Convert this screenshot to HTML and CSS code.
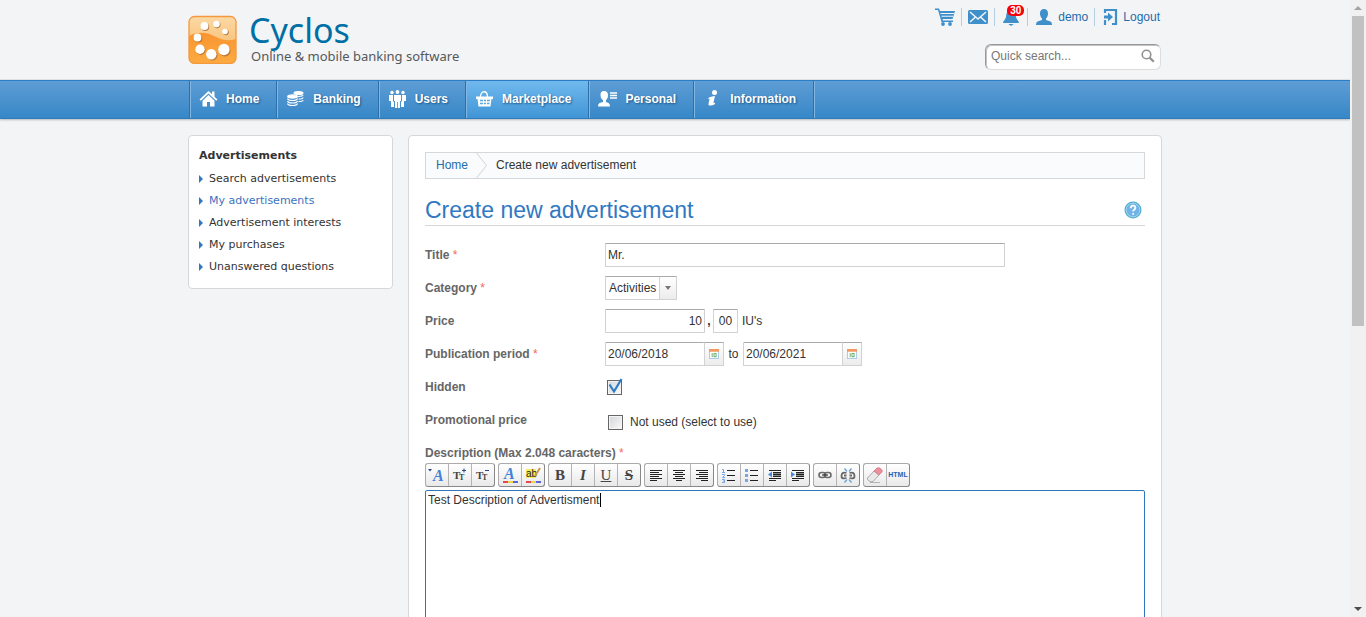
FILE: index.html
```html
<!DOCTYPE html>
<html lang="en">
<head>
<meta charset="utf-8">
<title>Cyclos - Create new advertisement</title>
<link rel="stylesheet" href="styles.css">
</head>
<body>
<div class="page">
  <header class="header">
    <div class="container header-inner">
      <a class="brand" href="#">
        <svg class="brand-mark" viewBox="0 0 49 49" aria-hidden="true">
          <defs>
            <linearGradient id="lg1" x1="0" y1="0" x2="0" y2="1"><stop offset="0" stop-color="#fbd9a6"/><stop offset="1" stop-color="#f7b25a"/></linearGradient>
            <linearGradient id="lg2" x1="0" y1="0" x2="0" y2="1"><stop offset="0" stop-color="#f9942f"/><stop offset="1" stop-color="#fcab42"/></linearGradient>
          </defs>
          <rect x="1" y="1.500" width="47" height="47" rx="5.500" fill="url(#lg1)"/>
          <path d="M1 21C10 16 19 17 28 22C36 26 42 26 48 24V43Q48 48.500 42 48.500H7Q1 48.500 1 43Z" fill="url(#lg2)"/>
          <rect x="1" y="1.500" width="47" height="47" rx="5.500" fill="none" stroke="#f5993f" stroke-width="1.300"/>
          <g fill="#a8672b" opacity=".75"><circle cx="17.300" cy="12" r="3.900"/><circle cx="29.200" cy="9.800" r="3.400"/><circle cx="37.900" cy="17.300" r="2.900"/><circle cx="10.500" cy="23.500" r="3.900"/><circle cx="12.800" cy="35.300" r="4.700"/><circle cx="24.300" cy="40.300" r="5.200"/><circle cx="36.900" cy="35.700" r="5.700"/></g>
          <g fill="#fff"><circle cx="16.500" cy="11" r="3.900"/><circle cx="28.500" cy="9" r="3.300"/><circle cx="37" cy="16.500" r="2.800"/><circle cx="9.500" cy="22.500" r="3.900"/><circle cx="12" cy="34.300" r="4.700"/><circle cx="23.300" cy="39.300" r="5.200"/><circle cx="35.900" cy="34.500" r="5.700"/></g>
        </svg>
        <span class="brand-text">
          <span class="brand-name">Cyclos</span>
          <span class="brand-tagline">Online &amp; mobile banking software</span>
        </span>
      </a>
      <div class="header-tools">
        <nav class="user-links" aria-label="User">
          <a href="#" aria-label="Cart"><svg width="20" height="18" viewBox="0 0 20 18" fill="#3f8fcb"><path d="M0 0.500H4L5 3H20L17.500 11H7.500L8 12.500H18V14H6.500L3 2H0Z"/><path d="M5.500 5.500H19M6.500 8.300H18" stroke="#f3f4f6" stroke-width="1.100"/><circle cx="8" cy="16" r="1.900"/><circle cx="15" cy="16" r="1.900"/></svg></a>
          <a href="#" aria-label="Messages"><svg width="20" height="18" viewBox="0 0 20 18"><rect y="2" width="20" height="14" rx="1.500" fill="#3f8fcb"/><path d="M2 4L10 11L18 4M2 14L7.500 9M18 14L12.500 9" fill="none" stroke="#f3f4f6" stroke-width="1.500"/></svg></a>
          <a class="bell" href="#" aria-label="Notifications"><svg width="20" height="18" viewBox="0 0 20 18" fill="#3f8fcb"><path d="M10 2C5.500 2 5.500 6 5 9C4.500 11.500 2 13 2 15H18C18 13 15.500 11.500 15 9C14.500 6 14.500 2 10 2ZM7.500 16H12.500Q10 19.500 7.500 16Z"/></svg><span class="badge">30</span></a>
          <a href="#"><svg width="18" height="18" viewBox="0 0 18 18" fill="#3f8fcb"><path d="M9 1C6.500 1 4.900 2.500 5 5.500C5 8 6 9.500 7 10.500V12L2.500 13.500Q1 14.200 1 17H17Q17 14.200 15.500 13.500L11 12V10.500C12 9.500 13 8 13 5.500C13 2.500 11.500 1 9 1Z"/></svg>demo</a>
          <a href="#"><svg width="16" height="18" viewBox="0 0 16 18"><path d="M3 5V2H14V16H10M3 12V17" fill="none" stroke="#3f8fcb" stroke-width="2.200"/><path d="M2 7.500H6V4.500L11 9L6 13.500V10.500H2Z" fill="#3f8fcb"/></svg>Logout</a>
        </nav>
        <form class="search">
          <input type="search" placeholder="Quick search..." aria-label="Quick search">
          <button type="button" aria-label="Search"><svg width="14" height="14" viewBox="0 0 14 14" fill="none" stroke="#929292"><circle cx="5.500" cy="5.500" r="4.300" stroke-width="1.600"/><path d="M8.500 8.500L12.800 12.800" stroke-width="2.300"/></svg></button>
        </form>
      </div>
    </div>
  </header>

  <nav class="menu" aria-label="Main">
    <ul class="container menu-list">
      <li><a href="#"><svg viewBox="0 0 19 18"><path d="M9.500 1L0.500 9.500L1.800 10.800L9.500 3.600L17.200 10.800L18.500 9.500L15.500 6.700V1.500H13V4.300Z"/><path d="M9.500 5L3.500 10.700V16.500H8V12H11V16.500H15.500V10.700Z"/></svg>Home</a></li>
      <li><a href="#"><svg viewBox="0 0 19 18"><g fill="none" stroke="#fff" stroke-width="1.100"><ellipse cx="12.500" cy="3" rx="4.500" ry="1.500" fill="#fff"/><path d="M12 6.500Q17 6.500 17 4.800M12.500 9Q17 9 17 7.500M12.500 11.500Q17 11.500 17 10"/><ellipse cx="6.500" cy="6.500" rx="4.900" ry="1.600" fill="#fff"/><path d="M1.500 8.500Q2 10.500 6.500 10.500T11.500 8.500M1.500 11Q2 13 6.500 13T11.500 11M1.500 13.500Q2 15.500 6.500 15.500T11.500 13.500"/></g></svg>Banking</a></li>
      <li><a href="#"><svg viewBox="0 0 19 18"><circle cx="9.500" cy="2" r="1.900"/><circle cx="4" cy="2.500" r="1.700"/><circle cx="15" cy="2.500" r="1.700"/><path d="M6 5H13V11H12V18H7V11H6ZM1 5H5V11L6 12V17H3V11H1ZM14 5H18V11H16V17H13V12L14 11Z"/><path d="M9.500 12V18" stroke="#4993ce" stroke-width=".8"/></svg>Users</a></li>
      <li class="active"><a href="#"><svg viewBox="0 0 19 18"><path d="M5.500 7C5.500 0 12.500 0 12.500 7" fill="none" stroke="#fff" stroke-width="1.300"/><path d="M1 6.500H18V9H16.500L15.500 16.500H3.500L2.500 9H1Z"/><path d="M5 10.500H8M9 10.500H11M12 10.500H15M5 13.500H8M9 13.500H11M12 13.500H14.500" stroke="#5ca9e0" stroke-width="1.500"/></svg>Marketplace</a></li>
      <li><a href="#"><svg viewBox="0 0 19 18"><path d="M6 1C3.500 1 2.500 2.500 2.500 5C2.500 8 4 9.500 5 10V12L1.500 13Q0 13.500 0 16.500H12Q12 13.500 10.500 13L8 12V10C9 9 10 8 10 5C10 2.500 8.500 1 6 1Z"/><path d="M12 3H19M12 5.500H19M12 8H19" stroke="#fff" stroke-width="1.300"/></svg>Personal</a></li>
      <li><a href="#"><svg viewBox="0 0 19 18"><circle cx="11.500" cy="2.500" r="2.500"/><path d="M6 7.500Q9 6.200 12 6L10.500 12.500Q10.500 13.500 12 12.500V14Q9 16 6.500 15.500Q5 15 5.700 12.500L6.500 9.500Q7 8.300 5 9Z"/></svg>Information</a></li>
    </ul>
  </nav>

  <div class="container columns">
    <aside class="panel side">
      <h2>Advertisements</h2>
      <ul>
        <li><a href="#">Search advertisements</a></li>
        <li><a class="current" href="#">My advertisements</a></li>
        <li><a href="#">Advertisement interests</a></li>
        <li><a href="#">My purchases</a></li>
        <li><a href="#">Unanswered questions</a></li>
      </ul>
    </aside>

    <main class="panel content">
      <nav class="breadcrumb" aria-label="Breadcrumb">
        <a href="#">Home</a>
        <svg width="12" height="25" viewBox="0 0 12 25" fill="none" stroke="#d2d3d5" aria-hidden="true"><path d="M0.500 0L10.500 12.500L0.500 25"/></svg>
        <span>Create new advertisement</span>
      </nav>
      <div class="title-bar">
        <h1>Create new advertisement</h1>
        <button class="help" type="button" aria-label="Help"><svg width="18" height="18" viewBox="0 0 18 18"><circle cx="9" cy="9" r="8.500" fill="#4fadcb"/><circle cx="9" cy="9" r="6.900" fill="#6fb3e8" stroke="#b4e0f2" stroke-width=".8"/><path d="M6.700 7.200Q6.700 4.700 9 4.700T11.400 6.900C11.400 8.500 9.100 8.500 9.100 10.600M9.100 12V13.800" fill="none" stroke="#fff" stroke-width="1.700"/></svg></button>
      </div>

      <form class="ad-form">
        <div class="row">
          <label for="title">Title <span class="req">*</span></label>
          <input class="field title-field" id="title" type="text" value="Mr.">
        </div>
        <div class="row">
          <label for="category">Category <span class="req">*</span></label>
          <div class="select-box">
            <select class="field" id="category"><option>Activities</option></select>
            <span class="arrow"></span>
          </div>
        </div>
        <div class="row">
          <label for="price">Price</label>
          <div class="inline">
            <input class="field amount" id="price" type="text" value="10"><span class="comma">,</span><input class="field cents" type="text" value="00" aria-label="Cents"><span class="unit">IU's</span>
          </div>
        </div>
        <div class="row">
          <label for="from">Publication period <span class="req">*</span></label>
          <div class="inline">
            <div class="date"><input class="field" id="from" type="text" value="20/06/2018"><button type="button" aria-label="Choose start date"><svg width="10" height="10" viewBox="0 0 11 11"><rect x=".5" y=".5" width="10" height="10" fill="#fff" stroke="#a9c8e4"/><path d="M0 0H11V3H0Z" fill="#f3985f"/><path d="M3.500 4.500V9" stroke="#5fab68" fill="none"/><rect x="5.500" y="5" width="2.300" height="3.500" stroke="#5fab68" fill="none"/></svg></button></div>
            <label class="to" for="until">to</label>
            <div class="date"><input class="field" id="until" type="text" value="20/06/2021"><button type="button" aria-label="Choose end date"><svg width="10" height="10" viewBox="0 0 11 11"><rect x=".5" y=".5" width="10" height="10" fill="#fff" stroke="#a9c8e4"/><path d="M0 0H11V3H0Z" fill="#f3985f"/><path d="M3.500 4.500V9" stroke="#5fab68" fill="none"/><rect x="5.500" y="5" width="2.300" height="3.500" stroke="#5fab68" fill="none"/></svg></button></div>
          </div>
        </div>
        <div class="row">
          <label for="hidden">Hidden</label>
          <div class="check"><input id="hidden" type="checkbox" checked><svg width="17" height="17" viewBox="0 0 17 17" aria-hidden="true"><path d="M2.500 6.500L7 13.500L14.500 1" fill="none" stroke="#2f7cc9" stroke-width="2.200"/></svg></div>
        </div>
        <div class="row">
          <span class="row-title">Promotional price</span>
          <div class="check promo"><input id="promo" type="checkbox"><label for="promo">Not used (select to use)</label></div>
        </div>

        <div class="editor">
          <label for="description">Description (Max 2.048 caracters) <span class="req">*</span></label>
          <div class="toolbar">
            <div class="group">
              <button type="button" aria-label="Font"><svg viewBox="0 0 22 22"><text x="7" y="17" class="glyph-a">A</text><path d="M2 5H6L4 7.500Z" fill="#264a8a"/></svg></button>
              <button type="button" aria-label="Larger text"><svg viewBox="0 0 22 22"><text x="4" y="15" class="glyph-t">T</text><text x="10" y="16" class="glyph-s">T</text><path d="M13 6.500H17M15 4.500V8.500" stroke="#264a8a"/></svg></button>
              <button type="button" aria-label="Smaller text"><svg viewBox="0 0 22 22"><text x="4" y="15" class="glyph-t">T</text><text x="10" y="16" class="glyph-s">T</text><path d="M13 6.500H17" stroke="#264a8a"/></svg></button>
            </div>
            <div class="group">
              <button type="button" aria-label="Text color"><svg viewBox="0 0 22 22"><text x="5" y="15" class="glyph-a">A</text><path d="M4 18H9" stroke="#e5484f" stroke-width="2"/><path d="M9 18H14" stroke="#eed34c" stroke-width="2"/><path d="M14 18H19" stroke="#5b68dc" stroke-width="2"/></svg></button>
              <button type="button" aria-label="Highlight"><svg viewBox="0 0 22 22"><path d="M4 5H14V14H4Z" fill="#f7ed57"/><text x="4" y="13" class="glyph-ab">ab</text><path d="M18 4L13 12" stroke="#c89a4b" stroke-width="2"/><path d="M4 18H9" stroke="#e5484f" stroke-width="2"/><path d="M9 18H14" stroke="#eed34c" stroke-width="2"/><path d="M14 18H19" stroke="#5b68dc" stroke-width="2"/></svg></button>
            </div>
            <div class="group letters">
              <button type="button" aria-label="Bold"><b>B</b></button>
              <button type="button" aria-label="Italic"><i>I</i></button>
              <button type="button" aria-label="Underline"><u>U</u></button>
              <button type="button" aria-label="Strikethrough"><s>S</s></button>
            </div>
            <div class="group lines">
              <button type="button" aria-label="Align left"><svg viewBox="0 0 22 22"><path d="M5 6.500H17M5 8.500H14M5 10.500H17M5 12.500H14M5 14.500H17M5 16.500H12"/></svg></button>
              <button type="button" aria-label="Align center"><svg viewBox="0 0 22 22"><path d="M5 6.500H17M7 8.500H15M5 10.500H17M7 12.500H15M5 14.500H17M8 16.500H14"/></svg></button>
              <button type="button" aria-label="Align right"><svg viewBox="0 0 22 22"><path d="M5 6.500H17M8 8.500H17M5 10.500H17M8 12.500H17M5 14.500H17M10 16.500H17"/></svg></button>
            </div>
            <div class="group lines">
              <button type="button" aria-label="Numbered list"><svg viewBox="0 0 22 22"><path d="M9 6.500H17M9 11.500H17M9 16.500H17"/><g stroke="#79a6e0"><path d="M4 5.500H5.500V8.500M4 8.500H7M4 10.500H6.500V11.500L4.500 13.500H7M4 15.500H6.500V18.500H4M5 17H6"/></g></svg></button>
              <button type="button" aria-label="Bulleted list"><svg viewBox="0 0 22 22"><path d="M9 6.500H17M9 11.500H17M9 16.500H17"/><path d="M4 6.500H7M4 11.500H7M4 16.500H7" stroke="#79a6e0" stroke-width="3"/></svg></button>
              <button type="button" aria-label="Outdent"><svg viewBox="0 0 22 22"><path d="M5 6.500H17M9 8.500H17M9 12.500H17M5 14.500H17M5 16.500H12"/><path d="M9 10.500H17" stroke-width="2"/><path d="M4 10.500L8 7.500V13.500Z" fill="#4a89dc" stroke="none"/></svg></button>
              <button type="button" aria-label="Indent"><svg viewBox="0 0 22 22"><path d="M5 6.500H17M9 8.500H17M9 12.500H17M5 14.500H17M5 16.500H12"/><path d="M9 10.500H17" stroke-width="2"/><path d="M8 10.500L4 7.500V13.500Z" fill="#4a89dc" stroke="none"/></svg></button>
            </div>
            <div class="group">
              <button type="button" aria-label="Add link"><svg viewBox="0 0 22 22" fill="none" stroke="#6a6a6a" stroke-width="1.600"><rect x="5" y="8.500" width="6.500" height="5" rx="2.500"/><rect x="10.500" y="8.500" width="6.500" height="5" rx="2.500"/><path d="M8 11H14" stroke="#333" stroke-width="1.200"/></svg></button>
              <button type="button" aria-label="Remove link"><svg viewBox="0 0 22 22" fill="none" stroke="#666" stroke-width="1.800"><path d="M9.500 9Q5 7.500 4.500 11.500T9.500 14M12.500 9Q17 7.500 17.500 11.500T12.500 14M7 11.500H9.500M12.500 11.500H15"/><path d="M7.500 4.500L10 7.500M14.500 4.500L12 7.500M7.500 18.500L10 15.500M14.500 18.500L12 15.500" stroke="#6aa0dc" stroke-width="1.300"/></svg></button>
            </div>
            <div class="group">
              <button type="button" aria-label="Clear formatting"><svg viewBox="0 0 22 22"><path d="M6 18.500H16" stroke="#b5b5b5"/><path d="M3.500 14L10 7L15 11L9 17.500Q7 18.500 5 17Q3 15.500 3.500 14Z" fill="#e9e9e9" stroke="#999" stroke-width=".8"/><path d="M10 7L13 4Q15 3 17 5T18 8L15 11Z" fill="#ee8f9d" stroke="#d07886" stroke-width=".8"/></svg></button>
              <button class="html" type="button">HTML</button>
            </div>
          </div>
          <div class="text-area">
            <textarea id="description" spellcheck="false">Test Description of Advertisment</textarea>
            <span class="caret" aria-hidden="true"></span>
          </div>
        </div>
      </form>
    </main>
  </div>
</div>
<div class="scrollbar" aria-hidden="true">
  <svg width="16" height="16" viewBox="0 0 16 16"><path d="M4 10L8 6L12 10Z" fill="#a3a3a3"/></svg>
  <div class="track"><div class="thumb"></div></div>
  <svg width="16" height="16" viewBox="0 0 16 16"><path d="M4 6H12L8 10Z" fill="#4d4d4d"/></svg>
</div>
</body>
</html>
```
FILE: styles.css
```css
* { box-sizing: border-box; }

body {
  margin: 0;
  display: flex;
  height: 100vh;
  overflow: hidden;
  background: #f3f4f6;
  color: #333;
  font: 12px/16px "Liberation Sans", Arial, sans-serif;
}

input, select, textarea, button { font: inherit; color: inherit; margin: 0; }
button { display: flex; align-items: center; justify-content: center; padding: 0; border: 0; background: none; }
ul { list-style: none; margin: 0; padding: 0; }
a { color: #1f6cab; text-decoration: none; }
svg { flex: none; }

.page { flex: 1; min-width: 0; overflow: hidden; }
.container { max-width: 974px; margin: 0 auto; }

/* Header */
.header { height: 80px; border-bottom: 1px solid #e2e4e6; }
.header-inner { display: flex; justify-content: space-between; align-items: flex-start; }
.brand { display: flex; gap: 12px; padding-top: 15px; }
.brand-mark { width: 49px; height: 49px; }
.brand-text { display: flex; flex-direction: column; }
.brand-name { color: #006fa5; font: 34px/31px "Noto Sans", sans-serif; }
.brand-tagline { padding-left: 2px; color: #55585b; font: 13px/21px "Noto Sans", sans-serif; }
.header-tools { display: flex; flex-direction: column; align-items: flex-end; gap: 18px; padding-top: 8px; }
.user-links { display: flex; }
.user-links a { display: flex; align-items: center; gap: 5px; padding: 0 6px; height: 18px; border-left: 1px solid #b5cfe0; }
.user-links a:first-child { border-left: 0; }
.user-links a:nth-child(4), .user-links a:last-child { padding-left: 7px; }
.user-links a:last-child { padding-right: 2px; }
.bell { position: relative; }
.badge { position: absolute; top: -3px; left: 12px; width: 17px; border-radius: 5px; background: #f5000b; color: #fff; font: bold 10px/11px "Liberation Sans", sans-serif; text-align: center; }
.search { display: flex; align-items: center; width: 176px; height: 26px; margin-right: 1px; padding: 0 5px 2px; border: 1px solid #dcdcdc; border-top-color: #999; border-left-color: #999; border-radius: 6px; background: #fff; box-shadow: inset 1px 1px #c4c4c4; }
.search input { flex: 1; min-width: 0; padding: 0; border: 0; outline: 0; background: none; }
.search input::placeholder { color: #777; opacity: 1; }

/* Main menu */
.menu { height: 39px; border-top: 1px solid #2b7cc0; border-bottom: 1px solid #2b7cc0; background: linear-gradient(#5e9dd5, #3787c7); box-shadow: 0 1px 2px #b4b6b9; }
.menu-list { display: flex; height: 100%; padding-left: 1px; }
.menu-list li { border-right: 1px solid #2d6fa6; box-shadow: inset 1px 0 #83b7e1; }
.menu-list li:first-child { border-left: 1px solid #2d6fa6; }
.menu-list li:last-child { box-shadow: inset 1px 0 #83b7e1, 1px 0 #83b7e1; }
.menu-list .active { background: linear-gradient(#70b9ee, #4195d6); }
.menu-list a { display: flex; align-items: center; gap: 8px; height: 36px; padding: 0 17px 0 9px; color: #fff; font-weight: bold; text-shadow: 1px 1px 2px #1d5486; }
.menu-list svg { width: 19px; height: 18px; fill: #fff; }

/* Columns */
.columns { display: flex; align-items: flex-start; gap: 15px; padding-top: 16px; }
.panel { border: 1px solid #d5d7d9; border-radius: 4px; background: #fff; }
.side { flex: 0 0 205px; padding: 9px 10px 10px; font: 11px/22px "DejaVu Sans", Verdana, sans-serif; }
.side h2 { margin: 0 0 1px; font-size: 11px; line-height: 22px; }
.side a { display: flex; align-items: center; gap: 6px; color: #333; }
.side a::before { content: ""; border: 4px solid transparent; border-left-color: #3079c2; border-right-width: 0; }
.side .current { color: #3c72c0; }
.content { flex: 1; min-width: 0; padding: 16px; }
.breadcrumb { display: flex; align-items: center; gap: 8px; height: 27px; padding-left: 10px; border: 1px solid #d5d7d9; background: #f9fbfc; }
.breadcrumb a, .breadcrumb span { padding-bottom: 2px; }
.title-bar { display: flex; align-items: center; justify-content: space-between; margin-top: 17px; padding: 0 3px 0 0; border-bottom: 1px solid #d5d7d9; }
.help { padding-bottom: 2px; }
h1 { margin: 0; color: #3079c2; font-size: 23px; font-weight: normal; line-height: 29px; }

/* Form */
.ad-form { display: flex; flex-direction: column; gap: 9px; padding-top: 17px; }
.row { display: grid; grid-template-columns: 180px 1fr; align-items: center; min-height: 24px; }
.row > label, .row-title, .editor > label { color: #666; font-weight: bold; }
.req { color: #f76464; font-weight: normal; }
.field { height: 24px; padding: 0 2px; border: 1px solid #d2d2d2; border-top-color: #aaa; border-radius: 1px; background: #fff; outline: 0; }
.title-field { width: 400px; max-width: 100%; }
.select-box { position: relative; justify-self: start; display: flex; }
.select-box select { appearance: none; width: 72px; padding-left: 3px; }
.select-box .arrow { position: absolute; inset: 1px 1px 1px auto; width: 17px; display: flex; align-items: center; justify-content: center; border-left: 1px solid #d2d2d2; background: linear-gradient(#fff, #ececec); pointer-events: none; }
.arrow::after { content: ""; border: 3px solid transparent; border-top: 4px solid #777; border-bottom: 0; }
.inline { display: flex; align-items: center; }
.amount { width: 100px; text-align: right; }
.comma { width: 8px; text-align: center; font-weight: bold; }
.cents { width: 25px; text-align: center; }
.unit { padding-left: 4px; }
.date { display: flex; }
.date input { width: 99px; border-right: 0; }
.date button { width: 20px; height: 24px; border: 1px solid #d2d2d2; border-top-color: #aaa; background: linear-gradient(#fff, #ececec); }
.to { width: 19px; text-align: center; }
.check { position: relative; display: flex; align-items: center; gap: 7px; padding: 1px 0 0 2px; }
.check input { appearance: none; width: 15px; height: 15px; border: 1px solid #666; background: linear-gradient(135deg, #d4d6d9, #fafafa); box-shadow: inset 0 0 0 1px #f4f4f4; }
.check svg { position: absolute; left: 2px; top: -1px; pointer-events: none; }
.promo { padding: 4px 0 0 3px; }
.editor { display: flex; flex-direction: column; }
.editor > label { padding: 4px 0 2px; }
.toolbar { display: flex; flex-wrap: wrap; gap: 3px; margin-bottom: 3px; }
.group { display: flex; border: 1px solid #ababab; border-right-color: #888; border-bottom-color: #888; border-radius: 3px; background: linear-gradient(#fff, #e9e9e9); }
.group button { width: 22px; height: 22px; }
.group button + button { width: 23px; border-left: 1px solid #b4b4b4; }
.group svg { width: 22px; height: 22px; }
.lines svg { stroke: #222; fill: none; }
.letters button { color: #444; font: 15px/20px "Liberation Serif", serif; }
.letters s, .letters b, .letters i { font-weight: bold; }
.glyph-a { fill: #4382d6; font: italic bold 16px "Liberation Serif", serif; }
.glyph-t { fill: #444; font: bold 11px "Liberation Serif", serif; }
.glyph-s { fill: #444; font: bold 8px "Liberation Serif", serif; }
.glyph-ab { fill: #222; font: 10px "Liberation Sans", sans-serif; }
.group .html { color: #2461b5; font: bold 7px/10px "Liberation Sans", sans-serif; }
.text-area { position: relative; }
textarea { display: block; width: 100%; height: 300px; padding: 1px 2px; border: 1px solid #2e77bd; border-radius: 2px; background: #fff; outline: 0; resize: none; caret-color: transparent; }
.caret { position: absolute; left: 175px; top: 3px; width: 1px; height: 14px; background: #000; }

/* Window scrollbar */
.scrollbar { flex: 0 0 16px; display: flex; flex-direction: column; background: #f1f1f1; }
.track { flex: 1; padding: 0 2px; }
.thumb { height: 53%; background: #c1c1c1; }
```
